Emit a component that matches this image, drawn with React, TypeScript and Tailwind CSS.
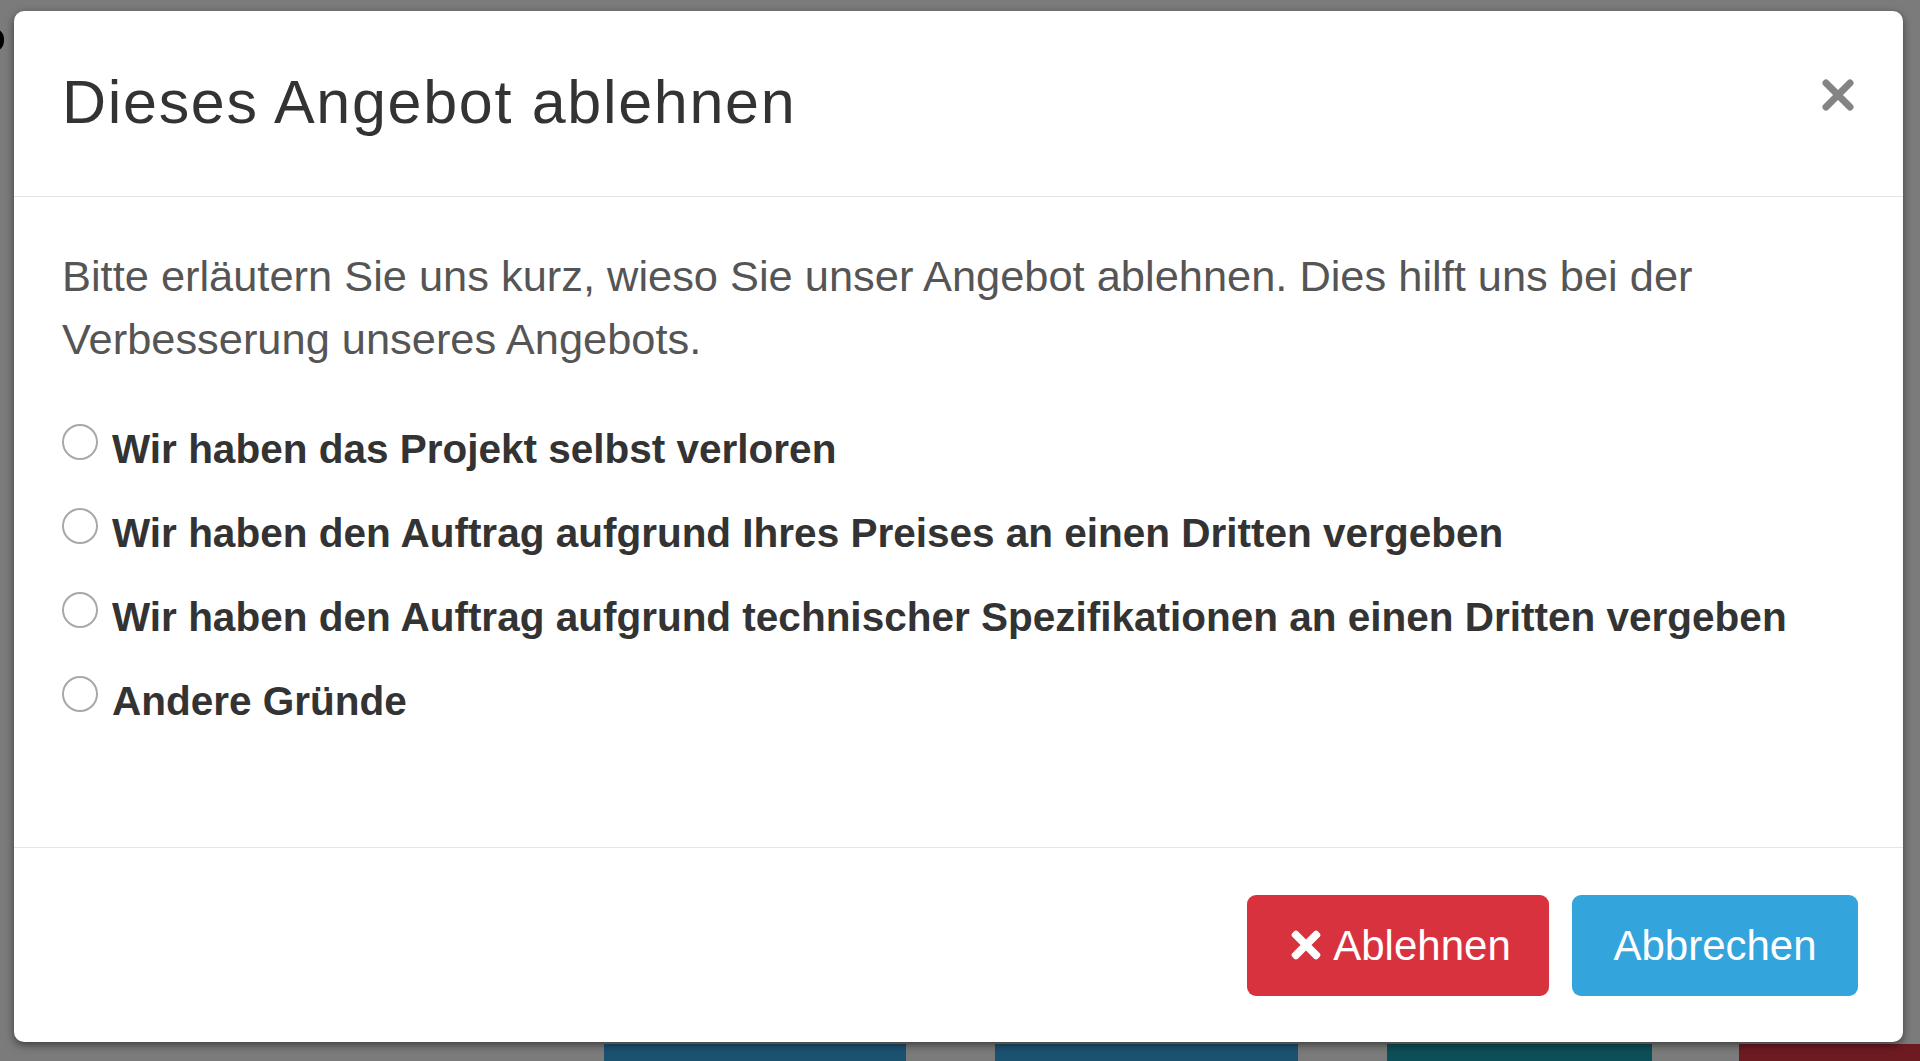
import { FaTimes } from "react-icons/fa";

const reasons = [
  "Wir haben das Projekt selbst verloren",
  "Wir haben den Auftrag aufgrund Ihres Preises an einen Dritten vergeben",
  "Wir haben den Auftrag aufgrund technischer Spezifikationen an einen Dritten vergeben",
  "Andere Gründe",
];

export default function App() {
  return (
    <div
      className="relative w-full h-[1061px] overflow-hidden bg-[#7b7b7b] flex flex-col justify-between"
      style={{ fontFamily: '"Liberation Sans", Arial, sans-serif' }}
    >
      {/* page behind the backdrop */}
      <div className="mt-[28px] -ml-[18px] w-[22px] h-[24px] rounded-full border-[4px] border-black" />
      <div className="flex h-[17px]">
        <div className="w-[604px]" />
        <div className="w-[302px] bg-[#1b5270]" />
        <div className="w-[89px]" />
        <div className="w-[303px] bg-[#1b5270]" />
        <div className="w-[89px]" />
        <div className="w-[265px] bg-[#0d4f58]" />
        <div className="w-[87px]" />
        <div className="flex-1 bg-[#6e1a21]" />
      </div>

      {/* Modal */}
      <div className="absolute left-[14px] top-[11px] w-[1889px] h-[1031px] bg-white rounded-[10px] shadow-[0_3px_9px_rgba(0,0,0,0.5)] flex flex-col">
        {/* Header */}
        <div className="h-[186px] shrink-0 border-b border-[#e5e5e5] flex items-start justify-between pl-[48px] pr-[48px] pt-[61px]">
          <h4 className="text-[61px] leading-none tracking-[1.7px] text-[#333]">
            Dieses Angebot ablehnen
          </h4>
          <button className="mt-[6px] w-[34px] h-[34px] opacity-60">
            <svg viewBox="0 0 34 34" width="34" height="34">
              <path d="M5 5 L29 29 M29 5 L5 29" stroke="#333" strokeWidth="7" strokeLinecap="round" />
            </svg>
          </button>
        </div>

        {/* Body */}
        <div className="flex-1 pl-[48px] pr-[48px] pt-[48px]">
          <p className="text-[43.4px] leading-[63px] text-[#555]">
            Bitte erläutern Sie uns kurz, wieso Sie unser Angebot ablehnen. Dies hilft uns bei der
            Verbesserung unseres Angebots.
          </p>
          <div className="mt-[53px] flex flex-col gap-[34px]">
            {reasons.map((r) => (
              <label key={r} className="flex items-start gap-[14px] cursor-pointer">
                <input
                  type="radio"
                  name="reason"
                  className="appearance-none shrink-0 w-[36px] h-[36px] rounded-full border-2 border-[#a8a8a8] bg-white"
                />
                <span className="text-[40.5px] leading-[50px] font-bold text-[#333]">{r}</span>
              </label>
            ))}
          </div>
        </div>

        {/* Footer */}
        <div className="h-[195px] shrink-0 border-t border-[#e5e5e5] flex items-center justify-end gap-[23px] pr-[45px]">
          <button className="w-[302px] h-[101px] rounded-[9px] bg-[#d9323f] text-white text-[42px] flex items-center justify-center gap-[6px]">
            <FaTimes size={42} />
            Ablehnen
          </button>
          <button className="w-[286px] h-[101px] rounded-[9px] bg-[#34a4dd] text-white text-[42px] flex items-center justify-center">
            Abbrechen
          </button>
        </div>
      </div>
    </div>
  );
}
